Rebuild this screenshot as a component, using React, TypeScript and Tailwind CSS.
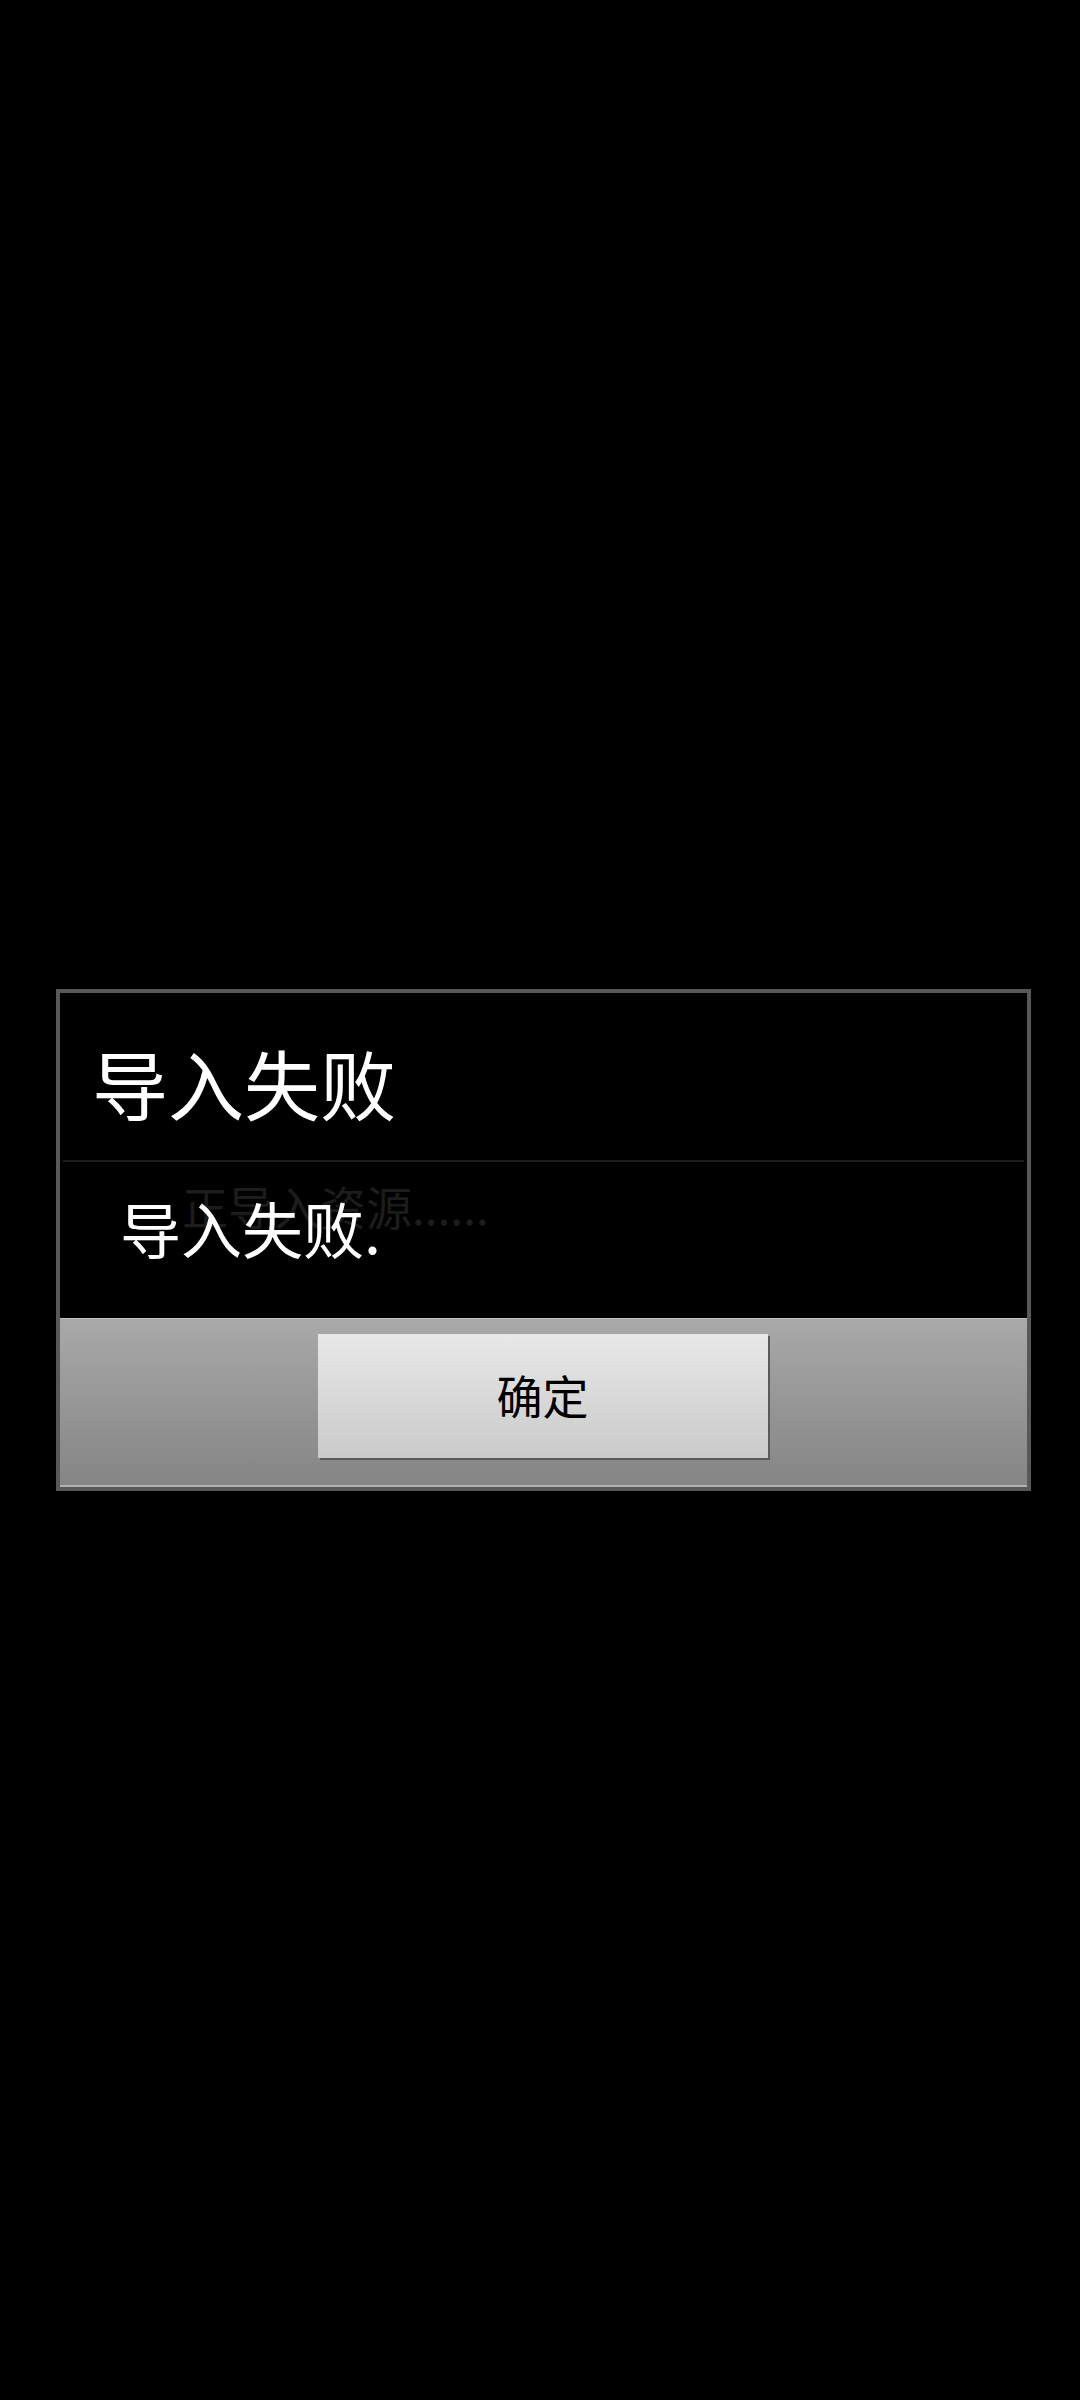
export default function App() {
  return (
    <div
      className="min-h-[2400px] w-full bg-black pt-[989px] pl-[56px]"
      style={{ fontFamily: '"Noto Sans CJK SC", "Noto Sans", sans-serif' }}
    >
      <div className="w-[975px] border-4 border-[#585858] bg-black">
        {/* title */}
        <div className="h-[167px] pt-[51px] pl-[32px]">
          <h1 className="text-[76px] leading-none text-white">导入失败</h1>
        </div>
        <div className="mx-[3px] h-[2px] bg-[#1b1b1b]" />

        {/* message */}
        <div className="relative h-[156px] pt-[35px] pl-[60px]">
          <span className="absolute left-[122px] top-[20px] text-[46px] leading-none text-[#1c1c1c]">
            正导入资源......
          </span>
          <p className="relative text-[61px] leading-none text-white">导入失败.</p>
        </div>

        {/* buttons */}
        <div className="border-t border-[#bdbdbd] border-b-2 border-b-[#b2b2b2] bg-gradient-to-b from-[#a9a9a9] to-[#858585]">
          <div className="flex h-[166px] justify-center pt-[15px] pr-[2px]">
            <button className="h-[124px] w-[450px] bg-gradient-to-b from-[#e8e8e8] to-[#cacaca] pb-[4px] text-[46px] leading-none text-black shadow-[2px_2px_0_#5a5a5a]">
              确定
            </button>
          </div>
        </div>
      </div>
    </div>
  );
}
